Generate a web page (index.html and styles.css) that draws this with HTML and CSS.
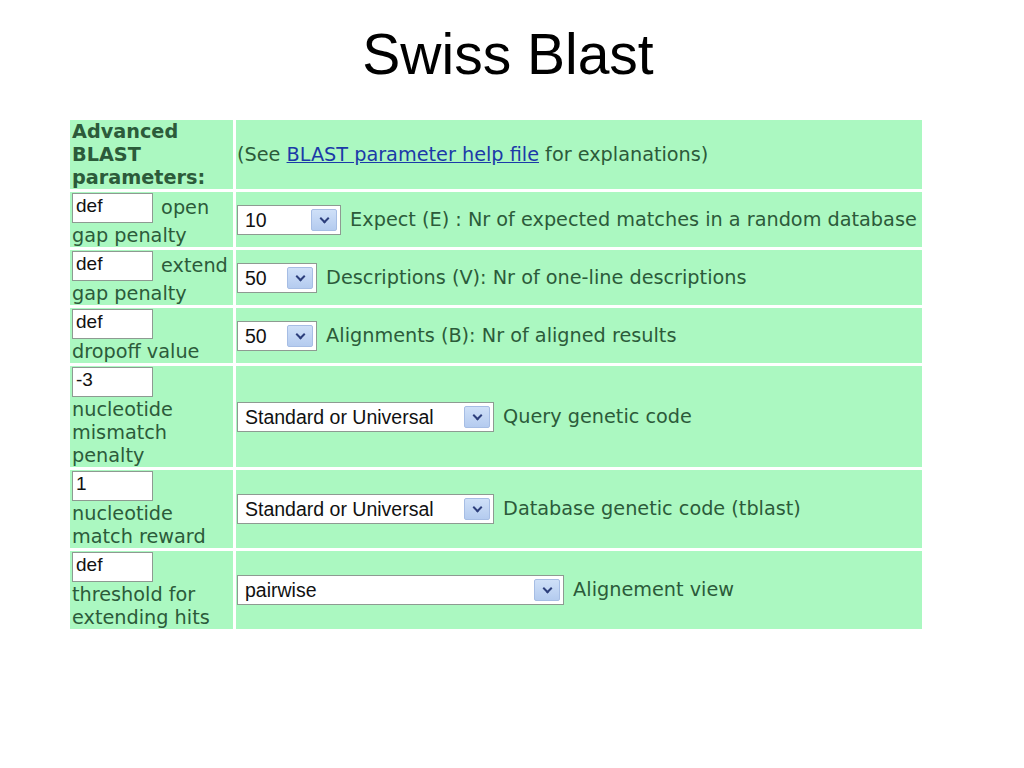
FILE: index.html
```html
<!DOCTYPE html>
<html lang="en">
<head>
    <meta charset="UTF-8">
    <title>Swiss Blast</title>
    <link rel="stylesheet" href="styles.css">
</head>
<body>
    <h1 class="title">Swiss Blast</h1>

    <table class="params">
        <tr>
            <td class="label head">Advanced BLAST parameters:</td>
            <td class="field">(See <a href="#">BLAST parameter help file</a> for explanations)</td>
        </tr>
        <tr>
            <td class="label"><span class="input">def</span> open gap penalty</td>
            <td class="field"><span class="select w-expect">10<i class="arrow"></i></span> Expect (E) : Nr of expected matches in a random database</td>
        </tr>
        <tr>
            <td class="label"><span class="input">def</span> extend gap penalty</td>
            <td class="field"><span class="select w-num">50<i class="arrow"></i></span> Descriptions (V): Nr of one-line descriptions</td>
        </tr>
        <tr>
            <td class="label"><span class="input">def</span><br>dropoff value</td>
            <td class="field"><span class="select w-num">50<i class="arrow"></i></span> Alignments (B): Nr of aligned results</td>
        </tr>
        <tr>
            <td class="label"><span class="input">-3</span><br>nucleotide mismatch penalty</td>
            <td class="field"><span class="select w-code">Standard or Universal<i class="arrow"></i></span> Query genetic code</td>
        </tr>
        <tr>
            <td class="label"><span class="input">1</span><br>nucleotide match reward</td>
            <td class="field"><span class="select w-code">Standard or Universal<i class="arrow"></i></span> Database genetic code (tblast)</td>
        </tr>
        <tr>
            <td class="label"><span class="input">def</span><br>threshold for extending hits</td>
            <td class="field"><span class="select w-view">pairwise<i class="arrow"></i></span> Alignement view</td>
        </tr>
    </table>
</body>
</html>
```

FILE: styles.css
```css
/* page */
:root {
    --cell-bg: #abf8c1;
    --cell-text: #2c5b3a;
    --link: #1b3aa8;
    --box-border: #8e9a92;
}

* {
    box-sizing: border-box;
}

body {
    margin: 0;
    padding: 0 0 0 67px;
    background: #ffffff;
    font-family: "DejaVu Sans", Verdana, sans-serif;
}

/* title */
.title {
    margin: 0 0 0 -67px;
    padding: 21px 8px 0 0;
    height: 117px;
    text-align: center;
    font-family: "Liberation Sans", Arial, sans-serif;
    font-weight: normal;
    font-size: 57px;
    line-height: 66px;
    color: #000000;
}

/* parameter table */
.params {
    border-collapse: separate;
    border-spacing: 3px;
    width: 858px;
    font-size: 19.25px;
    line-height: 23px;
    color: var(--cell-text);
}

.params td {
    background: var(--cell-bg);
    padding: 0 2px;
}

.label {
    width: 163px;
    vertical-align: top;
}

.label.head {
    font-weight: bold;
    vertical-align: middle;
}

.field {
    vertical-align: middle;
    padding-left: 1px !important;
}

.field a {
    color: var(--link);
}

/* fake inputs */
.input {
    display: inline-block;
    width: 81px;
    height: 30px;
    margin: 1px 2px 1px 0;
    padding: 0 3px;
    vertical-align: middle;
    background: #ffffff;
    border: 1px solid var(--box-border);
    font-family: "Liberation Sans", Arial, sans-serif;
    font-size: 19px;
    line-height: 24px;
    color: #111111;
}

.select {
    position: relative;
    display: inline-block;
    height: 30px;
    margin-right: 3px;
    padding: 0 7px;
    vertical-align: middle;
    background: #ffffff;
    border: 1px solid var(--box-border);
    font-family: "Liberation Sans", Arial, sans-serif;
    font-size: 19.5px;
    line-height: 28px;
    color: #111111;
}

.w-expect { width: 104px; }
.w-num { width: 80px; }
.w-code { width: 257px; }
.w-view { width: 327px; }

.arrow {
    position: absolute;
    top: 3px;
    right: 3px;
    width: 26px;
    height: 22px;
    background: linear-gradient(#cfe0f8, #b4cbef);
    border: 1px solid #a6bde4;
    border-radius: 2px;
}

.arrow::after {
    content: "";
    position: absolute;
    left: 9px;
    top: 5px;
    width: 5px;
    height: 5px;
    border-right: 2px solid #2d3f7c;
    border-bottom: 2px solid #2d3f7c;
    transform: rotate(45deg);
}
```
